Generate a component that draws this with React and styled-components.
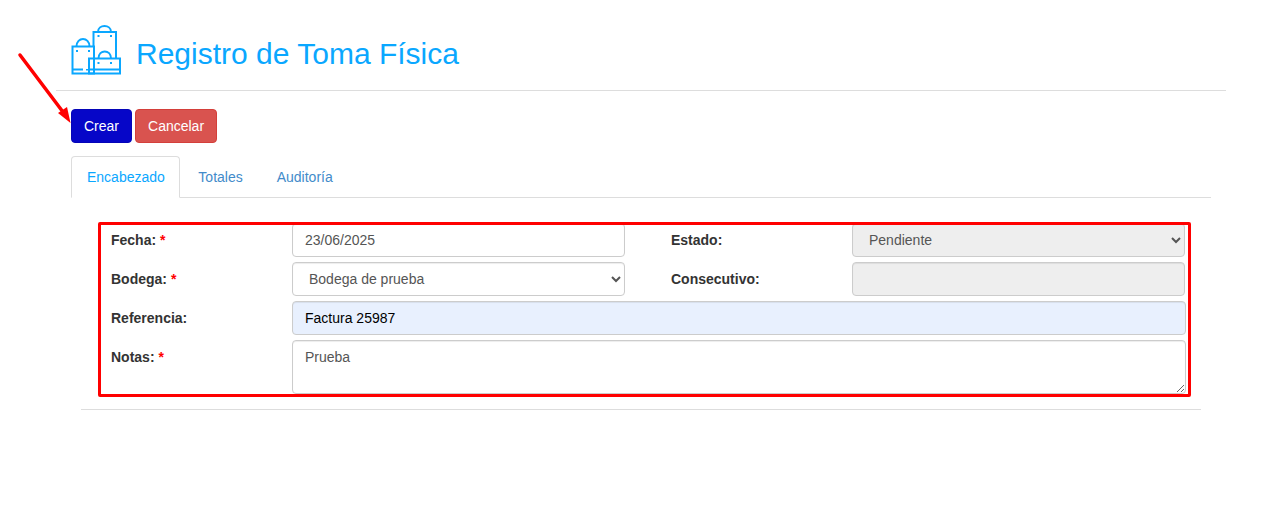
import React from 'react'
import styled, { createGlobalStyle } from 'styled-components';

const Global = createGlobalStyle`
  * { box-sizing: border-box; }
  body {
    margin: 0;
    background: #fff;
    font-family: "Liberation Sans", Arial, sans-serif;
    font-size: 14px;
    color: #333;
  }
`;

const Page = styled.div`
  position: relative;
  height: 523px;
  padding: 0 44px 0 56px;
  overflow: hidden;
`;

const Header = styled.div`
  display: flex;
  align-items: center;
  gap: 15px;
  padding: 25px 0 15px 15px;
  border-bottom: 1px solid #ddd;
  height: 91px;
`;

const Title = styled.h1`
  margin: 8px 0 0;
  font-size: 30px;
  font-weight: 400;
  color: #0aa7ff;
`;

const Toolbar = styled.div`
  display: flex;
  gap: 3px;
  margin: 18px 0 13px 15px;
`;

const Button = styled.button`
  height: 34px;
  padding: 6px 12px;
  font: 14px "Liberation Sans", Arial, sans-serif;
  color: #fff;
  background: ${p => p.$danger ? '#d9534f' : '#0606c8'};
  border: 1px solid ${p => p.$danger ? '#d43f3a' : '#0505b8'};
  border-radius: 4px;
`;

const Tabs = styled.ul`
  display: flex;
  gap: 2px;
  list-style: none;
  height: 42px;
  margin: 0 15px;
  padding: 0;
  border-bottom: 1px solid #ddd;
`;

const Tab = styled.li`
  height: 42px;
  padding: 10px ${p => p.$active ? '14.5px' : '15px'} 10px 15px;
  line-height: 20px;
  color: ${p => p.$active ? '#0aa7ff' : '#428bca'};
  background: ${p => p.$active ? '#fff' : 'transparent'};
  border: 1px solid ${p => p.$active ? '#ddd' : 'transparent'};
  border-bottom-color: ${p => p.$active ? '#fff' : 'transparent'};
  border-radius: 4px 4px 0 0;
`;

const Content = styled.div`
  margin: 24px 25px 0;
  padding-bottom: 12px;
  border-bottom: 1px solid #ddd;
`;

const Form = styled.form`
  position: relative;
  display: grid;
  grid-template-columns: 181px 333px 46px 181px 333px;
  grid-auto-rows: 34px;
  row-gap: 5px;
  height: 175px;
  margin: 0 10px 0 17px;
  padding: 1px 0 0 13px;
`;

const Label = styled.label`
  grid-column: ${p => p.$second ? 4 : 1};
  font-weight: 700;
  line-height: 34px;
  color: #333;
`;

const Required = styled.span`
  color: #f00;
`;

const controlStyles = `
  width: 100%;
  height: 34px;
  padding: 6px 12px;
  font: 14px "Liberation Sans", Arial, sans-serif;
  color: #555;
  background-color: #fff;
  border: 1px solid #ccc;
  border-radius: 4px;
  box-shadow: inset 0 1px 1px rgba(0, 0, 0, .075);
  outline: none;
`;

const Input = styled.input`
  ${controlStyles}
  &:disabled { background-color: #eee; }
`;

const Select = styled.select`
  ${controlStyles}
  &:disabled { background-color: #eee; opacity: 1; }
`;

const WideInput = styled(Input)`
  grid-column: 2 / -1;
  width: calc(100% + 1px);
  color: #000;
  background-color: #e8f0fe;
`;

const Notes = styled.textarea`
  ${controlStyles}
  grid-column: 2 / -1;
  width: calc(100% + 1px);
  height: 54px;
  padding-top: 8px;
  resize: vertical;
`;

const Highlight = styled.div`
  position: absolute;
  inset: 0;
  border: 3px solid #f00;
  border-radius: 2px;
  pointer-events: none;
`;

const Arrow = styled.svg`
  position: absolute;
  left: 15px;
  top: 50px;
`;

const BagsIcon = () => (
  <svg width="50" height="50" viewBox="0 0 50 50" fill="none" stroke="#0aa7ff" strokeWidth="2">
    <path d="M22.500 21V7H45V33" />
    <path d="M27 7C27 -1 40 -1 40 7" />
    <path d="M1.500 21.500H23V48.500H1.500Z" />
    <path d="M5.500 21.500C5.500 11.500 18.500 11.500 18.500 21.500" />
    <path d="M18 33.500H49V48.500H18Z" />
    <path d="M27.500 33.500C27.500 24 40 24 40 33.500" />
    <path d="M1.500 44.500H12M18 44.500H49" />
    <path d="M6 25V27M18 25V27M27.500 10V12M40 10V12M27.500 37V39M40 37V39M16 44V45.500" />
  </svg>
);

const App = () => {
  return (
    <Page>
      <Global />
      <Header>
        <BagsIcon />
        <Title>Registro de Toma Física</Title>
      </Header>
      <Toolbar>
        <Button type="button">Crear</Button>
        <Button type="button" $danger>Cancelar</Button>
      </Toolbar>
      <Tabs>
        <Tab $active>Encabezado</Tab>
        <Tab>Totales</Tab>
        <Tab>Auditoría</Tab>
      </Tabs>
      <Content>
        <Form>
          <Label>Fecha: <Required>*</Required></Label>
          <Input defaultValue="23/06/2025" />
          <Label $second>Estado:</Label>
          <Select disabled defaultValue="Pendiente">
            <option>Pendiente</option>
          </Select>
          <Label>Bodega: <Required>*</Required></Label>
          <Select defaultValue="Bodega de prueba">
            <option>Bodega de prueba</option>
          </Select>
          <Label $second>Consecutivo:</Label>
          <Input disabled />
          <Label>Referencia:</Label>
          <WideInput defaultValue="Factura 25987" />
          <Label>Notas: <Required>*</Required></Label>
          <Notes defaultValue="Prueba" />
          <Highlight />
        </Form>
      </Content>
      <Arrow width="60" height="76" viewBox="0 0 60 76" fill="none">
        <path d="M5 5L48 62" stroke="#f00" strokeWidth="3.5" strokeLinecap="round" />
        <path d="M55.500 73L43 63L52 57Z" fill="#f00" />
      </Arrow>
    </Page>
  )
}

export default App
